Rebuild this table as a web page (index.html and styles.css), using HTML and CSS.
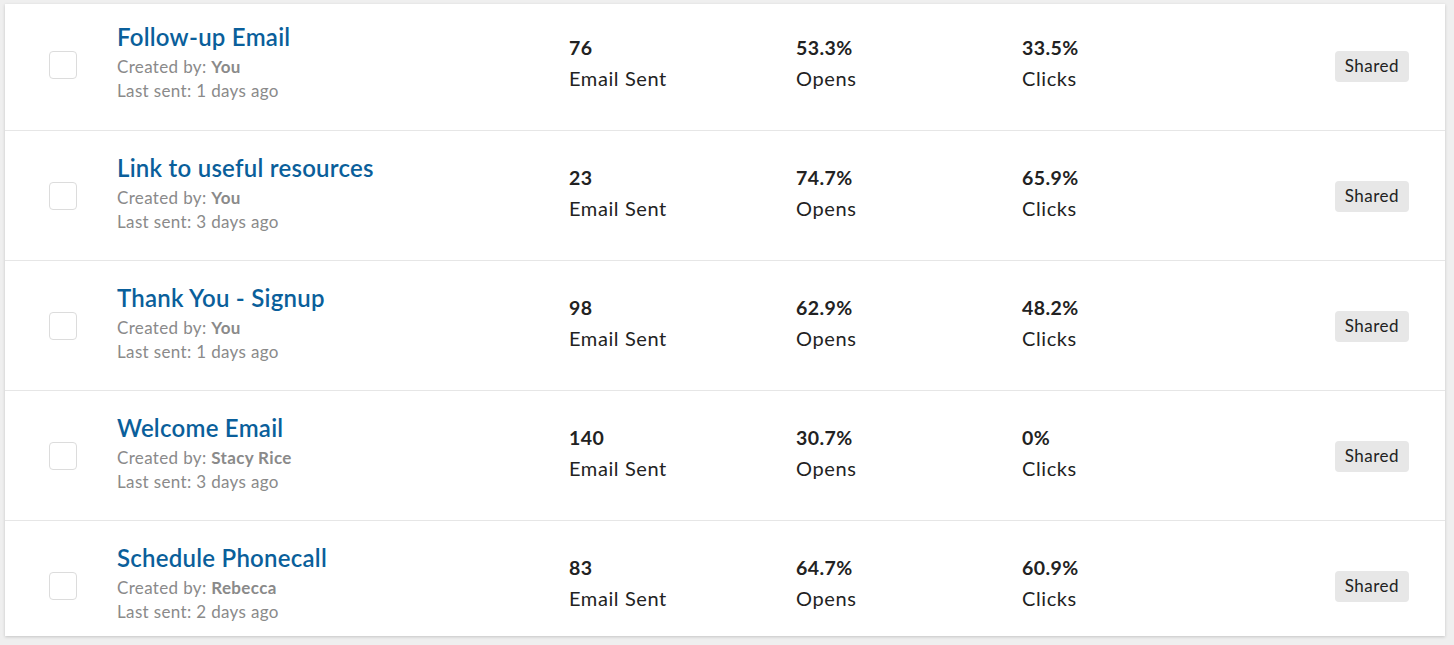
FILE: index.html
```html
<!DOCTYPE html>
<html lang="en">
<head>
<meta charset="utf-8">
<title>Email templates</title>
<link rel="stylesheet" href="styles.css">
</head>
<body>
<div class="card">
  <div class="row">
    <div class="check"><span class="box"></span></div>
    <div class="info">
      <a class="title">Follow-up Email</a>
      <div class="meta">Created by: <b>You</b></div>
      <div class="meta">Last sent: 1 days ago</div>
    </div>
    <div class="stat"><div class="num">76</div><div class="label">Email Sent</div></div>
    <div class="stat"><div class="num">53.3%</div><div class="label">Opens</div></div>
    <div class="stat"><div class="num">33.5%</div><div class="label">Clicks</div></div>
    <div class="tag-cell"><span class="tag">Shared</span></div>
  </div>
  <div class="row">
    <div class="check"><span class="box"></span></div>
    <div class="info">
      <a class="title">Link to useful resources</a>
      <div class="meta">Created by: <b>You</b></div>
      <div class="meta">Last sent: 3 days ago</div>
    </div>
    <div class="stat"><div class="num">23</div><div class="label">Email Sent</div></div>
    <div class="stat"><div class="num">74.7%</div><div class="label">Opens</div></div>
    <div class="stat"><div class="num">65.9%</div><div class="label">Clicks</div></div>
    <div class="tag-cell"><span class="tag">Shared</span></div>
  </div>
  <div class="row">
    <div class="check"><span class="box"></span></div>
    <div class="info">
      <a class="title">Thank You - Signup</a>
      <div class="meta">Created by: <b>You</b></div>
      <div class="meta">Last sent: 1 days ago</div>
    </div>
    <div class="stat"><div class="num">98</div><div class="label">Email Sent</div></div>
    <div class="stat"><div class="num">62.9%</div><div class="label">Opens</div></div>
    <div class="stat"><div class="num">48.2%</div><div class="label">Clicks</div></div>
    <div class="tag-cell"><span class="tag">Shared</span></div>
  </div>
  <div class="row">
    <div class="check"><span class="box"></span></div>
    <div class="info">
      <a class="title">Welcome Email</a>
      <div class="meta">Created by: <b>Stacy Rice</b></div>
      <div class="meta">Last sent: 3 days ago</div>
    </div>
    <div class="stat"><div class="num">140</div><div class="label">Email Sent</div></div>
    <div class="stat"><div class="num">30.7%</div><div class="label">Opens</div></div>
    <div class="stat"><div class="num">0%</div><div class="label">Clicks</div></div>
    <div class="tag-cell"><span class="tag">Shared</span></div>
  </div>
  <div class="row">
    <div class="check"><span class="box"></span></div>
    <div class="info">
      <a class="title">Schedule Phonecall</a>
      <div class="meta">Created by: <b>Rebecca</b></div>
      <div class="meta">Last sent: 2 days ago</div>
    </div>
    <div class="stat"><div class="num">83</div><div class="label">Email Sent</div></div>
    <div class="stat"><div class="num">64.7%</div><div class="label">Opens</div></div>
    <div class="stat"><div class="num">60.9%</div><div class="label">Clicks</div></div>
    <div class="tag-cell"><span class="tag">Shared</span></div>
  </div>
</div>
</body>
</html>
```

FILE: styles.css
```css
html, body {
  margin: 0;
  padding: 0;
}
body {
  background: #efefef;
  font-family: "Lato", "Liberation Sans", sans-serif;
  color: #222;
  padding: 4px 9px 0 5px;
  height: 645px;
  box-sizing: border-box;
  overflow: hidden;
}
.card {
  background: #fff;
  height: 632px;
  overflow: hidden;
  box-shadow: 0 1px 3px rgba(0,0,0,0.18);
}
.row {
  display: grid;
  grid-template-columns: 68px 452px 227px 226px 1fr auto;
  align-items: center;
  height: 130px;
  box-sizing: border-box;
  padding: 0 36px 0 44px;
  border-top: 1px solid #e6e6e6;
}
.row:first-child {
  margin-top: -4px;
  border-top: none;
}
.check {
  display: flex;
  align-items: center;
}
.box {
  display: block;
  width: 28px;
  height: 28px;
  box-sizing: border-box;
  border: 1.5px solid #dcdcdc;
  border-radius: 4px;
  background: #fff;
}
.info {
  display: flex;
  flex-direction: column;
  margin-top: -4px;
}
.title {
  color: #0a5f9b;
  font-size: 24px;
  font-weight: 600;
  line-height: 28px;
  margin-bottom: 4px;
  letter-spacing: 0.25px;
}
.meta {
  color: #8a8a8a;
  font-size: 17px;
  line-height: 24px;
  letter-spacing: 0.35px;
}
.meta b {
  font-weight: 700;
}
.stat {
  display: flex;
  flex-direction: column;
  margin-top: -5px;
}
.num {
  font-size: 19.5px;
  font-weight: 700;
  line-height: 31px;
  letter-spacing: 0.4px;
}
.label {
  font-size: 20px;
  line-height: 31px;
  letter-spacing: 0.6px;
}
.tag-cell {
  display: flex;
  justify-content: flex-end;
  padding-top: 2px;
}
.tag {
  display: inline-block;
  background: #e7e7e7;
  border-radius: 4px;
  height: 31px;
  line-height: 30px;
  padding: 0 10px;
  font-size: 17px;
  letter-spacing: 0.5px;
  color: #222;
}
```
